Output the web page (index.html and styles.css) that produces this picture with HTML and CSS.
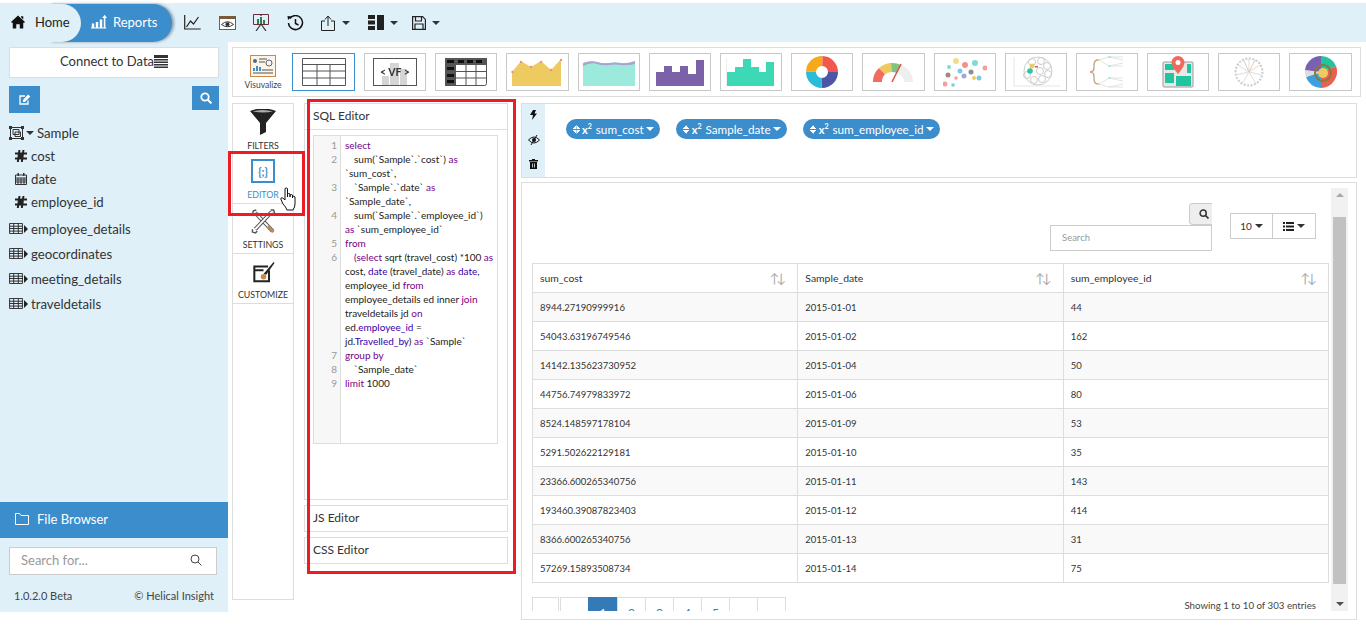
FILE: index.html
```html
<!DOCTYPE html>
<html lang="en">
<head>
    <meta charset="UTF-8">
    <meta name="viewport" content="width=device-width, initial-scale=1.0">
    <title>Helical Insight Reports</title>
    <link rel="stylesheet" href="styles.css">
</head>
<body>

<div class="page">
    <header class="topbar">
        <div class="pills">
            <a class="pill-reports">
                <svg width="16" height="16" viewBox="0 0 20 18"><path fill="#fff" d="M1 11h3v5H1zM6 9h3v7H6zM11 6h3v10h-3zM15 16h4v1H0v-1zM16 4h2v12h-2z"/><path fill="#fff" d="M17 0l3 4h-6z"/></svg>
                Reports
            </a>
            <a class="pill-home">
                <svg width="14" height="14" viewBox="0 0 16 15"><path fill="#111" d="M8 0l8 7.500-1.200 1.200L14 8v7H10v-5H6v5H2V8l-.8.7L0 7.500zM11.500 1H14v3.500l-2.500-2.300z"/></svg>
                Home
            </a>
        </div>
        <div class="tools">
            <svg class="tool" width="17" height="15" viewBox="0 0 17 15"><path fill="none" stroke="#222" stroke-width="1.200" d="M.7 0v14h16M2.500 12l4-6 3 3 5-7"/></svg>
            <svg class="tool" width="17" height="14" viewBox="0 0 17 14"><rect x=".5" y=".5" width="16" height="13" fill="#fff" stroke="#7a5a3a"/><path fill="#7a5a3a" d="M1 1h15v2H1z"/><path fill="none" stroke="#333" d="M2.500 8.500Q8.500 3 14.500 8.500 8.500 13 2.500 8.500z"/><circle cx="8.500" cy="8.300" r="2" fill="#333"/></svg>
            <svg class="tool" width="16" height="17" viewBox="0 0 16 17"><path fill="none" stroke="#6b2b3a" d="M.5.500h15v10H.5z"/><path fill="#2f7d4f" d="M4 5h2v5H4zM7 3h2v7H7zM10 6h2v4h-2z"/><path stroke="#333" stroke-width="1.200" d="M8 10L3 17M8 10l5 7M8 0v2"/></svg>
            <svg class="tool" width="17" height="16" viewBox="0 0 17 16"><path fill="none" stroke="#111" stroke-width="1.500" d="M2.800 3.500A7 7 0 1 1 1.500 8M8.500 4v4.500l3 1.500"/><path fill="#111" d="M.5 1l4 .5L1 5z"/></svg>
            <span class="tool-caret">
                <svg width="15" height="16" viewBox="0 0 15 16"><path fill="none" stroke="#222" d="M4 6H.5v9.500h13V6H10M7 11V1.500M4 4.500l3-3.500 3 3.500"/></svg>
                <i class="caret"></i>
            </span>
            <span class="tool-caret">
                <svg width="16" height="15" viewBox="0 0 16 15"><path fill="#222" d="M0 0h7v4H0zM0 5.500h7v4H0zM0 11h7v4H0zM9 0h7v15H9z"/></svg>
                <i class="caret"></i>
            </span>
            <span class="tool-caret tool-last">
                <svg width="14" height="14" viewBox="0 0 14 14"><path fill="none" stroke="#222" stroke-width="1.200" d="M.6.600h10l2.800 2.800v10H.6zM3.500 1v4h6V1M3 13.500V8h8v5.500"/></svg>
                <i class="caret"></i>
            </span>
        </div>
    </header>

    <div class="main">
        <aside class="sidebar">
            <button class="connect">Connect to Data<svg width="14" height="13" viewBox="0 0 14 13"><path fill="#333" d="M0 0h14v3H0zM0 4h14v1.500H0zM0 6.500h14V8H0zM0 9h14v1.500H0zM0 11.500h14V13H0z"/></svg></button>
            <div class="side-actions">
                <span class="btn-edit">
                    <svg width="12" height="11" viewBox="0 0 12 11"><path fill="none" stroke="#fff" stroke-width="1.300" d="M9 6.500V10H1V2h5"/><path fill="#fff" d="M4 6l5-5.500 2.300 2L6 8H4z"/></svg>
                </span>
                <span class="btn-find">
                    <svg width="12" height="12" viewBox="0 0 12 12"><circle cx="5" cy="5" r="3.700" fill="none" stroke="#fff" stroke-width="1.800"/><path stroke="#fff" stroke-width="2" d="M7.800 7.800l3.600 3.600"/></svg>
                </span>
            </div>
            <div class="tree">
                <div class="tree-row tree-root">
                    <svg width="15" height="14" viewBox="0 0 15 14"><path fill="none" stroke="#333" d="M1.500 1.500h12v11h-12zM4 3.500h6v5H4zM6 6h5.500v4.500H6z"/><path fill="#333" d="M0 0h3v3H0zM12 0h3v3h-3zM0 11h3v3H0zM12 11h3v3h-3z"/></svg>
                    <i class="caret"></i><span>Sample</span>
                </div>
                <div class="tree-row tree-leaf"><svg width="12" height="12" viewBox="0 0 12 12"><path fill="#222" d="M3.500 0h2l-.4 2.500h2L7.500 0h2L9 2.500h3v2H8.800l-.3 3H12v2H8.200L7.800 12h-2l.4-2.500h-2L3.800 12h-2l.4-2.500H0v-2h2.500l.3-3H0v-2h3.100z"/></svg><span>cost</span></div>
                <div class="tree-row tree-leaf"><svg width="12" height="12" viewBox="0 0 12 12"><path fill="none" stroke="#333" d="M.5 2h11v9.500H.5zM.5 5h11M.5 7h11M.5 9h11M3 5v6M6 5v6M9 5v6"/><path fill="#333" d="M2.500 0h1.500v3H2.500zM8 0h1.500v3H8z"/></svg><span>date</span></div>
                <div class="tree-row tree-leaf"><svg width="12" height="12" viewBox="0 0 12 12"><path fill="#222" d="M3.500 0h2l-.4 2.500h2L7.500 0h2L9 2.500h3v2H8.800l-.3 3H12v2H8.200L7.800 12h-2l.4-2.500h-2L3.800 12h-2l.4-2.500H0v-2h2.500l.3-3H0v-2h3.100z"/></svg><span>employee_id</span></div>
                <div class="tree-row tree-table tree-first"><svg width="14" height="11" viewBox="0 0 15 12"><path fill="none" stroke="#222" d="M.5.500h14v11H.5zM.5 3.500h14M.5 6h14M.5 8.800h14M5 .5v11M10 .5v11"/></svg><i class="caret-right"></i><span>employee_details</span></div>
                <div class="tree-row tree-table"><svg width="14" height="11" viewBox="0 0 15 12"><path fill="none" stroke="#222" d="M.5.500h14v11H.5zM.5 3.500h14M.5 6h14M.5 8.800h14M5 .5v11M10 .5v11"/></svg><i class="caret-right"></i><span>geocordinates</span></div>
                <div class="tree-row tree-table"><svg width="14" height="11" viewBox="0 0 15 12"><path fill="none" stroke="#222" d="M.5.500h14v11H.5zM.5 3.500h14M.5 6h14M.5 8.800h14M5 .5v11M10 .5v11"/></svg><i class="caret-right"></i><span>meeting_details</span></div>
                <div class="tree-row tree-table"><svg width="14" height="11" viewBox="0 0 15 12"><path fill="none" stroke="#222" d="M.5.500h14v11H.5zM.5 3.500h14M.5 6h14M.5 8.800h14M5 .5v11M10 .5v11"/></svg><i class="caret-right"></i><span>traveldetails</span></div>
            </div>
            <div class="file-browser">
                <svg width="14" height="12" viewBox="0 0 14 12"><path fill="none" stroke="#fff" d="M.5.500h4l1.500 2h7.500v9H.5z"/></svg>
                File Browser
            </div>
            <div class="side-search">
                <span>Search for...</span>
                <svg width="12" height="12" viewBox="0 0 12 12"><circle cx="5" cy="5" r="4" fill="none" stroke="#444"/><path stroke="#444" d="M8 8l3.500 3.500"/></svg>
            </div>
            <div class="side-foot">
                <span>1.0.2.0 Beta</span>
                <span>© Helical Insight</span>
            </div>
        </aside>

        <div class="workspace">
            <div class="vis-strip">
                <div class="vis-label">
                    <svg width="26" height="22" viewBox="0 0 26 22"><rect x=".5" y=".5" width="25" height="21" fill="#fdf3e6" stroke="#c98a4b"/><circle cx="5" cy="6" r="2" fill="#4a6a8a"/><circle cx="19" cy="8" r="3" fill="none" stroke="#4a6a8a"/><path stroke="#555" d="M9 4h8M9 7h6M3 18h20M12 15h11"/><path fill="#3c8dcb" d="M3 13h2v3H3zM6 11h2v5H6zM9 12h2v4H9z"/></svg>
                    <span>Visuvalize</span>
                </div>
                <div class="thumb thumb-active">
                    <svg viewBox="0 0 44 28" width="44" height="28"><path fill="none" stroke="#555" d="M.5.500h43v27H.5zM.5 6.500h43M.5 13h43M.5 20h43M15 6.500v21M28 6.500v21"/></svg>
                </div>
                <div class="thumb">
                    <svg viewBox="0 0 44 28" width="44" height="28"><path fill="#d5d5d5" d="M9 18h7v9H9zM17 5h9v22h-9zM27 11h7v16h-7z"/><rect x=".5" y=".5" width="43" height="27" fill="none" stroke="#555"/><text x="22" y="18" text-anchor="middle" class="vf">&lt; VF &gt;</text></svg>
                </div>
                <div class="thumb">
                    <svg viewBox="0 0 42 28" width="42" height="28"><rect x=".5" y=".5" width="41" height="27" rx="2" fill="#fff" stroke="#555"/><path fill="#555" d="M0 0h42v7H0zM0 7h11v21H0z"/><path fill="#111" d="M2 2h7v3H2zM13 2h6v3h-6zM22 2h6v3h-6zM31 2h6v3h-6zM2 9h7v3H2zM2 16h7v3H2zM2 22h7v3H2z"/><path stroke="#555" fill="none" d="M0 13.500h42M0 20h42M21 7v21M31 7v21"/></svg>
                </div>
                <div class="thumb">
                    <svg viewBox="0 0 52 28" width="52" height="28"><path fill="#eecb60" d="M1 14L10 3l10 6 10-6 10 9L50 1v27H1z"/><g fill="#ef8d8d"><circle cx="1.500" cy="14" r="1.200"/><circle cx="10" cy="4" r="1.200"/><circle cx="20" cy="9" r="1.200"/><circle cx="30" cy="4" r="1.200"/><circle cx="40" cy="12" r="1.200"/><circle cx="50" cy="2" r="1.200"/></g></svg>
                </div>
                <div class="thumb">
                    <svg viewBox="0 0 52 28" width="52" height="28"><path fill="#9beadb" d="M0 5q8-3 14-1t12 1 12 0 14-2v25H0z"/><path fill="#a9a3cf" d="M0 5q8-3 14-1t12 1 12 0 14-2v3q-8 2-14 1t-12 0-12-1T0 8z"/></svg>
                </div>
                <div class="thumb">
                    <svg viewBox="0 0 50 28" width="50" height="28"><path fill="#7b62a8" d="M1 14h8V8h8v6h8V8h8v8h8V2h8v26H1z"/></svg>
                </div>
                <div class="thumb">
                    <svg viewBox="0 0 50 28" width="50" height="28"><path stroke="#eee" d="M.5 0v28"/><path fill="#3dd9b7" d="M1 14h8v14H1zM9 9h8v19H9zM17 1h8v27h-8zM25 9h8v19h-8zM33 14h7v14h-7zM40 4h8v24h-8z"/></svg>
                </div>
                <div class="thumb">
                    <svg viewBox="0 0 32 32" width="32" height="32">
                        <circle cx="16" cy="16" r="11" fill="none" stroke="#4d55a8" stroke-width="10" stroke-dasharray="17.300 52"/>
                        <circle cx="16" cy="16" r="11" fill="none" stroke="#2bbcd8" stroke-width="10" stroke-dasharray="17.300 52" stroke-dashoffset="-17.300"/>
                        <circle cx="16" cy="16" r="11" fill="none" stroke="#f7a81b" stroke-width="10" stroke-dasharray="17.300 52" stroke-dashoffset="-34.600"/>
                        <circle cx="16" cy="16" r="11" fill="none" stroke="#f2564d" stroke-width="10" stroke-dasharray="17.300 52" stroke-dashoffset="-51.900"/>
                    </svg>
                </div>
                <div class="thumb">
                    <svg viewBox="0 0 40 20" width="40" height="20">
                        <path fill="#eee" d="M0 20A20 19 0 0 1 40 20H31A11 10 0 0 0 9 20z"/>
                        <path fill="#f46a5c" d="M0 20A20 19 0 0 1 6 6l6 6A11 10 0 0 0 9 20z"/>
                        <path fill="#eecb60" d="M6 6A20 19 0 0 1 18 1l1 9A11 10 0 0 0 12 12z"/>
                        <path fill="#7fc47f" d="M18 1A20 19 0 0 1 28 3l-4 8A11 10 0 0 0 19 10z"/>
                        <path stroke="#d9534f" stroke-width="1.500" d="M19 20L28 2"/>
                    </svg>
                </div>
                <div class="thumb">
                    <svg viewBox="0 0 44 32" width="44" height="32">
                        <circle cx="13" cy="5" r="3" fill="#eecb60" opacity=".7"/><circle cx="6" cy="11" r="2" fill="#7edccb"/><circle cx="22" cy="9" r="3" fill="#f2766b" opacity=".8"/><circle cx="32" cy="7" r="3" fill="#7edccb"/><circle cx="42" cy="12" r="2.500" fill="#f2766b" opacity=".7"/>
                        <circle cx="17" cy="15" r="2.500" fill="#7ec8e8"/><circle cx="28" cy="16" r="2.500" fill="#8d8d8d"/><circle cx="5" cy="19" r="2.500" fill="#a08a7a"/><circle cx="21" cy="20" r="2.500" fill="#a8a3d8"/><circle cx="31" cy="22" r="2" fill="#eecb60"/><circle cx="36" cy="22" r="2.500" fill="#7ec8e8"/><circle cx="13" cy="22" r="1.800" fill="#f2a09a"/><circle cx="2" cy="28" r="2.500" fill="#f2a09a"/><circle cx="10" cy="29" r="1.800" fill="#7ec8e8"/>
                    </svg>
                </div>
                <div class="thumb">
                    <svg viewBox="0 0 48 32" width="48" height="32">
                        <path stroke="#e5e5e5" fill="none" d="M2 1v29h46"/>
                        <circle cx="26" cy="15" r="14" fill="#fff" stroke="#ccc"/>
                        <g fill="none" stroke="#ccc"><circle cx="20" cy="6" r="3.500"/><circle cx="29" cy="5" r="3.500"/><circle cx="35" cy="10" r="3.500"/><circle cx="36" cy="18" r="3.500"/><circle cx="30" cy="23" r="3.500"/><circle cx="22" cy="24" r="3.500"/><circle cx="15" cy="19" r="3.500"/><circle cx="28" cy="15" r="3.500"/></g>
                        <circle cx="20" cy="10" r="2.500" fill="#eecb60"/><circle cx="18" cy="15" r="2.800" fill="#2fc4a4"/><path fill="#e0564c" d="M23 10h3v1.500h-3z"/>
                    </svg>
                </div>
                <div class="thumb">
                    <svg viewBox="0 0 34 32" width="34" height="32">
                        <path fill="none" stroke="#b9a58e" stroke-width="1.300" d="M8 4Q4 4 4 9v3q0 3-3 4 3 1 3 4v3q0 5 4 5"/>
                        <path fill="#f2967d" d="M0 15h2v2H0z"/><path fill="#eecb60" d="M7 3h2v2H7zM7 27h2v2H7z"/>
                        <g fill="none" stroke="#e3e3e3"><path d="M9 4l10-3h14M9 4l10 6h14M19 1l14 3M19 10l14-3"/><path d="M9 28l10-6h14M9 28l10 3h14M19 22l14 3M19 31l14-3"/></g>
                        <path fill="#b8e8de" d="M18 0h3v2h-3zM18 9h3v2h-3zM18 21h3v2h-3z"/>
                    </svg>
                </div>
                <div class="thumb">
                    <svg viewBox="0 0 32 32" width="32" height="32">
                        <rect x="1" y="6" width="30" height="25" rx="1" fill="#e8e8e8" stroke="#999"/>
                        <path fill="#22c4a0" d="M3 8h9v6H3zM3 17h9v10H3zM14 20h15v10H14zM25 8h4v9h-4z"/>
                        <path fill="#ef6a5c" d="M16 0a6.500 6.500 0 0 1 6.500 6.500C22.500 11 16 18 16 18S9.500 11 9.500 6.500A6.500 6.500 0 0 1 16 0z"/>
                        <circle cx="16" cy="6.500" r="2.500" fill="#fff"/>
                    </svg>
                </div>
                <div class="thumb">
                    <svg viewBox="0 0 30 30" width="30" height="30">
                        <circle cx="15" cy="15" r="13.500" fill="none" stroke="#ccc" stroke-width="2" stroke-dasharray="2 1.500"/>
                        <path fill="none" stroke="#ddd" d="M15 15V2M15 15L4 8M15 15L26 8M15 15L2 18M15 15L28 18M15 15L8 27M15 15L22 27"/>
                        <path fill="none" stroke="#e8c9b0" d="M15 15L10 4M15 15L21 3"/>
                    </svg>
                </div>
                <div class="thumb">
                    <svg viewBox="0 0 32 32" width="32" height="32">
                        <path fill="#22c4a0" d="M16 16V0a16 16 0 0 1 15 10z"/>
                        <path fill="#e8604f" d="M16 16l15-6a16 16 0 0 1-2 15 16 16 0 0 1-13 7z"/>
                        <path fill="#3c9fe0" d="M16 16v16A16 16 0 0 1 1 21z"/>
                        <path fill="#ddd" d="M16 16L1 21a16 16 0 0 1-1-7z"/>
                        <path fill="#7b5fb0" d="M16 16L0 14A16 16 0 0 1 16 0z"/>
                        <circle cx="18" cy="17" r="8" fill="none" stroke="#8a7a3a" stroke-width="2"/>
                        <circle cx="18" cy="17" r="5" fill="#eecb60"/>
                    </svg>
                </div>
            </div>

            <div class="lower">
                <nav class="tabs">
                    <div class="tab">
                        <svg width="26" height="26" viewBox="0 0 26 26"><path fill="#222" d="M0 2q13-5 26 0L16 14v9l-6 3V14z"/><path fill="#aaa" d="M3 2.500q10-3 20 0-10 2-20 0z"/></svg>
                        <span>FILTERS</span>
                    </div>
                    <div class="tab tab-active">
                        <span class="brace-icon">{;}</span>
                        <span>EDITOR</span>
                    </div>
                    <div class="tab">
                        <svg width="25" height="25" viewBox="0 0 25 26">
                            <path stroke="#555" stroke-width="4" d="M4 4l18 19"/><path stroke="#fff" stroke-width="2" d="M4 4l18 19"/>
                            <path stroke="#555" stroke-width="4" d="M21 3L4 21"/><path stroke="#fff" stroke-width="2" d="M21 3L4 21"/>
                            <path fill="none" stroke="#555" stroke-width="1.500" d="M5 1L2 2 1 5l2 2M20 1l3 0 1 3-2 2M1 21l0 3 3 1 2-2"/>
                            <path stroke="#b98a5a" stroke-width="3" d="M17 18l6 6"/>
                        </svg>
                        <span>SETTINGS</span>
                    </div>
                    <div class="tab">
                        <svg class="tab-customize" width="23" height="22" viewBox="0 0 24 24"><path fill="none" stroke="#222" stroke-width="2.200" d="M18 9v12H2V5h15M2 9h10"/><path fill="#222" d="M23 0l1 1-9 13-3-1z"/><circle cx="12" cy="16" r="3" fill="#c98a4b"/></svg>
                        <span>CUSTOMIZE</span>
                    </div>
                </nav>

                <section class="editors">
                    <div class="editor-box editor-sql">
                        <div class="editor-head">SQL Editor</div>
                        <div class="code">
                            <div class="code-line"><b>1</b><p><em>select</em></p></div>
                            <div class="code-line"><b>2</b><p class="ind">sum(`Sample`.`cost`) <em>as</em> `sum_cost`,</p></div>
                            <div class="code-line"><b>3</b><p class="ind">`Sample`.`date` <em>as</em> `Sample_date`,</p></div>
                            <div class="code-line"><b>4</b><p class="ind">sum(`Sample`.`employee_id`)<br><em>as</em> `sum_employee_id`</p></div>
                            <div class="code-line"><b>5</b><p><em>from</em></p></div>
                            <div class="code-line"><b>6</b><p class="ind"><em>(select</em> sqrt (travel_cost) *100 <em>as</em> cost, <u>date</u> (travel_date) <em>as</em> <u>date</u>, employee_id <em>from</em> employee_details ed inner <em>join</em> traveldetails jd <em>on</em><br>ed.<u>employee_id</u> =<br>jd.<u>Travelled_by</u>) <em>as</em> `Sample`</p></div>
                            <div class="code-line"><b>7</b><p><em>group by</em></p></div>
                            <div class="code-line"><b>8</b><p class="ind">`Sample_date`</p></div>
                            <div class="code-line"><b>9</b><p><em>limit</em> 1000</p></div>
                        </div>
                    </div>
                    <div class="editor-box editor-mini">JS Editor</div>
                    <div class="editor-box editor-mini">CSS Editor</div>
                </section>

                <section class="results">
                    <div class="fields-card">
                        <div class="field-tools">
                            <svg width="7" height="10" viewBox="0 0 7 10"><path fill="#111" d="M3 0h3L4.500 3.500H7L2 10l1-5H0z"/></svg>
                            <svg width="12" height="10" viewBox="0 0 12 10"><path fill="none" stroke="#111" d="M.5 5Q6-1 11.500 5 6 11 .5 5z"/><circle cx="6" cy="5" r="2" fill="#111"/><path stroke="#111" d="M9 0L3 10"/></svg>
                            <svg width="9" height="10" viewBox="0 0 9 10"><path fill="#111" d="M3 0h3v1h3v1.500H0V1h3zM1 3h7v7H1zM3 4.500v4h.8v-4zM5.200 4.500v4H6v-4z"/></svg>
                        </div>
                        <div class="field-pills">
                            <span class="field"><i class="sort-mini"></i><strong>x<sup>2</sup></strong>sum_cost<i class="caret"></i></span>
                            <span class="field"><i class="sort-mini"></i><strong>x<sup>2</sup></strong>Sample_date<i class="caret"></i></span>
                            <span class="field"><i class="sort-mini"></i><strong>x<sup>2</sup></strong>sum_employee_id<i class="caret"></i></span>
                        </div>
                    </div>

                    <div class="table-card">
                        <div class="table-scroll">
                            <div class="table-tools">
                                <div class="table-search">
                                    <span class="search-btn"><svg width="10" height="10" viewBox="0 0 12 12"><circle cx="5" cy="5" r="3.700" fill="none" stroke="#333" stroke-width="1.800"/><path stroke="#333" stroke-width="2" d="M7.800 7.800l3.600 3.600"/></svg></span>
                                    <div class="search-input">Search</div>
                                </div>
                                <div class="table-btns">
                                    <span>10<i class="caret"></i></span>
                                    <span><svg width="11" height="9" viewBox="0 0 11 9"><path fill="#222" d="M0 0h2v2H0zM3 0h8v2H3zM0 3.500h2v2H0zM3 3.500h8v2H3zM0 7h2v2H0zM3 7h8v2H3z"/></svg><i class="caret"></i></span>
                                </div>
                            </div>
                            <table class="data">
                                <thead>
                                    <tr><th>sum_cost<span class="sort">↑↓</span></th><th>Sample_date<span class="sort">↑↓</span></th><th>sum_employee_id<span class="sort">↑↓</span></th></tr>
                                </thead>
                                <tbody>
                                    <tr><td>8944.27190999916</td><td>2015-01-01</td><td>44</td></tr>
                                    <tr><td>54043.63196749546</td><td>2015-01-02</td><td>162</td></tr>
                                    <tr><td>14142.135623730952</td><td>2015-01-04</td><td>50</td></tr>
                                    <tr><td>44756.74979833972</td><td>2015-01-06</td><td>80</td></tr>
                                    <tr><td>8524.148597178104</td><td>2015-01-09</td><td>53</td></tr>
                                    <tr><td>5291.502622129181</td><td>2015-01-10</td><td>35</td></tr>
                                    <tr><td>23366.600265340756</td><td>2015-01-11</td><td>143</td></tr>
                                    <tr><td>193460.39087823403</td><td>2015-01-12</td><td>414</td></tr>
                                    <tr><td>8366.600265340756</td><td>2015-01-13</td><td>31</td></tr>
                                    <tr><td>57269.15893508734</td><td>2015-01-14</td><td>75</td></tr>
                                </tbody>
                            </table>
                            <div class="table-foot">
                                <ul class="pager">
                                    <li class="muted">«</li><li class="muted">‹</li><li class="on">1</li><li>2</li><li>3</li><li>4</li><li>5</li><li class="muted">›</li><li class="muted">»</li>
                                </ul>
                                <span class="showing">Showing 1 to 10 of 303 entries</span>
                            </div>
                        </div>
                        <div class="scrollbar">
                            <i class="arrow-up"></i>
                            <div class="thumb-bar"></div>
                            <i class="arrow-down"></i>
                        </div>
                    </div>
                </section>
            </div>
        </div>
    </div>

    <!-- annotations drawn on top of the screenshot -->
    <div class="mark mark-tab"></div>
    <div class="mark mark-sql"></div>
    <svg class="hand" width="19" height="26" viewBox="0 0 19 26"><path fill="#fff" stroke="#111" d="M5 1.500q1.500-1 2.500 0V10l0-3q1.500-1 2.500 0v3-2q1.500-1 2.500 0v3-1.500q1.500-.8 2.500.5v7q0 3-2 6H7q-1-3-4-6L.8 12q0-2 2-1L5 13z"/></svg>
</div>

</body>
</html>
```

FILE: styles.css
```css
* {
    box-sizing: border-box;
}

body {
    margin: 0;
    background-color: #fff;
    color: #333;
    font-family: "Lato", "Open Sans", sans-serif;
}

.page {
    position: relative;
    width: 1366px;
    height: 627px;
    overflow: hidden;
    padding-top: 3px;
}

.caret {
    display: inline-block;
    width: 0;
    height: 0;
    border-left: 4px solid transparent;
    border-right: 4px solid transparent;
    border-top: 4px solid currentColor;
    vertical-align: middle;
}

.caret-right {
    display: inline-block;
    width: 0;
    height: 0;
    border-top: 4px solid transparent;
    border-bottom: 4px solid transparent;
    border-left: 4px solid #222;
}

/* Top bar */
.topbar {
    display: flex;
    align-items: center;
    height: 39px;
    background-color: #dff0f9;
}

.pills {
    position: relative;
    width: 172px;
    height: 38px;
    flex-shrink: 0;
}

.pill-home,
.pill-reports {
    position: absolute;
    top: 0;
    height: 38px;
    display: flex;
    align-items: center;
    padding-bottom: 1px;
    font-size: 13px;
}

.pill-home {
    left: 0;
    width: 81px;
    gap: 10px;
    padding-left: 11px;
    background-color: #dff0f9;
    border-radius: 0 19px 19px 0;
    color: #222;
}

.pill-reports {
    left: 50px;
    width: 122px;
    gap: 6px;
    padding-left: 41px;
    background-color: #3c8dcb;
    border-radius: 0 19px 19px 0;
    box-shadow: 2px 0 3px #8a9bab;
    color: #fff;
}

.tools {
    display: flex;
    align-items: center;
    margin-left: 12px;
    gap: 17.500px;
}

.tool-caret {
    display: flex;
    align-items: center;
    gap: 6px;
    color: #333;
}

.tool-last {
    margin-left: -3px;
}

/* Left sidebar */
.main {
    display: flex;
}

.sidebar {
    display: flex;
    flex-direction: column;
    width: 228px;
    height: 570px;
    padding-top: 5px;
    flex-shrink: 0;
    background-color: #dff0f9;
}

.connect {
    display: flex;
    align-items: center;
    justify-content: center;
    width: 210px;
    height: 31px;
    margin-left: 9px;
    padding: 0 0 3px;
    background-color: #fff;
    border: 1px solid #ddd;
    color: #333;
    font-family: inherit;
    font-size: 13px;
}

.side-actions {
    display: flex;
    justify-content: space-between;
    align-items: flex-start;
    margin: 8px 9px 0;
}

.btn-edit,
.btn-find {
    display: flex;
    align-items: center;
    justify-content: center;
    background-color: #3c8dcb;
}

.btn-edit {
    width: 31px;
    height: 27px;
}

.btn-find {
    width: 27px;
    height: 24px;
}

.tree {
    margin-top: 8px;
    font-size: 13.200px;
    color: #333;
}

.tree-row {
    display: flex;
    align-items: center;
    height: 23px;
}

.tree-root {
    padding-left: 9px;
    gap: 2px;
}

.tree-root span {
    margin-left: 1px;
}

.tree-leaf {
    padding-left: 15px;
    gap: 4px;
}

.tree-table {
    height: 25px;
    padding-left: 9px;
    gap: 1px;
}

.tree-table span {
    margin-left: 2px;
}

.tree-first {
    margin-top: 3px;
}

.file-browser {
    display: flex;
    align-items: center;
    gap: 8px;
    height: 36px;
    margin-top: auto;
    padding: 0 0 3px 15px;
    background-color: #3c8dcb;
    color: #fff;
    font-size: 13px;
}

.side-search {
    display: flex;
    align-items: center;
    justify-content: space-between;
    width: 208px;
    height: 28px;
    margin: 9px 0 0 9px;
    padding: 0 14px 2px 11px;
    background-color: #fff;
    border: 1px solid #ccc;
    color: #999;
    font-size: 13px;
}

.side-foot {
    display: flex;
    justify-content: space-between;
    padding: 14px 14px 10px;
    font-size: 11px;
    color: #444;
}

/* Visual type strip */
.workspace {
    width: 1133px;
    padding: 5px 0 0 4px;
}

.vis-strip {
    display: flex;
    align-items: center;
    gap: 9px;
    width: 1129px;
    height: 50px;
    padding-left: 10px;
    background-color: #fff;
    border: 1px solid #ddd;
}

.vis-label {
    display: flex;
    flex-direction: column;
    align-items: center;
    width: 40px;
    font-size: 8.500px;
    color: #444;
}

.vis-label span {
    margin-top: 3px;
}

.thumb {
    display: flex;
    align-items: center;
    justify-content: center;
    width: 62.200px;
    height: 38px;
    overflow: hidden;
    flex-shrink: 0;
    border: 1px solid #c8c8c8;
}

.thumb svg {
    filter: blur(.4px);
}

.thumb-active {
    border-color: #3c8dcb;
    width: 63px;
}

.vf {
    font-size: 10.500px;
    font-weight: 700;
    fill: #333;
}

/* Lower area */
.lower {
    display: flex;
    margin-top: 6px;
}

.tabs {
    width: 62px;
    height: 497px;
    margin-right: 10px;
    background-color: #fff;
    border: 1px solid #ddd;
}

.tab {
    display: flex;
    flex-direction: column;
    align-items: center;
    height: 50px;
    padding-top: 5px;
    border-bottom: 1px solid #ddd;
    font-size: 8.800px;
    color: #333;
    gap: 5px;
}

.tab-customize {
    margin-top: 3px;
}

.tab-active {
    color: #3c8dcb;
    gap: 6px;
}

.brace-icon {
    display: flex;
    align-items: center;
    justify-content: center;
    width: 24px;
    height: 24px;
    border: 2px solid #3c8dcb;
    font-size: 11px;
    font-weight: 700;
}

.editors {
    display: flex;
    flex-direction: column;
    gap: 5px;
    width: 204px;
    margin-right: 13px;
}

.editor-box {
    background-color: #fff;
    border: 1px solid #ddd;
}

.editor-sql {
    height: 397px;
}

.editor-head {
    height: 26px;
    padding: 4px 8px;
    border-bottom: 1px solid #ddd;
    font-size: 12px;
}

.editor-mini {
    height: 27px;
    padding: 4px 8px;
    font-size: 12px;
}

.code {
    width: 185px;
    height: 309px;
    margin: 5px 0 0 8px;
    padding-top: 2px;
    border: 1px solid #ddd;
    background: linear-gradient(to right, #f7f7f7 26px, #ddd 26px, #ddd 27px, #fff 27px);
    font-size: 10px;
    line-height: 14px;
    color: #222;
}

.code-line {
    display: flex;
}

.code-line b {
    width: 24px;
    padding-right: 1px;
    flex-shrink: 0;
    font-weight: 400;
    text-align: right;
    color: #999;
}

.code-line p {
    margin: 0 0 0 7px;
    width: 152px;
}

.code-line .ind {
    text-indent: 9px;
}

.code-line em {
    font-style: normal;
    color: #708;
}

.code-line u {
    text-decoration: none;
    color: #30a;
}

/* Results */
.results {
    display: flex;
    flex-direction: column;
    gap: 4px;
    width: 836px;
}

.fields-card {
    display: flex;
    height: 75px;
    background-color: #fff;
    border: 1px solid #ddd;
}

.field-tools {
    display: flex;
    flex-direction: column;
    align-items: center;
    justify-content: space-between;
    width: 23px;
    padding: 6px 0 8px;
    background-color: #dff0f9;
}

.field-pills {
    display: flex;
    align-items: flex-start;
    gap: 16px;
    padding: 15px 0 0 21px;
}

.field {
    display: flex;
    align-items: center;
    height: 20px;
    padding: 0 6px 0 7px;
    gap: 2px;
    background-color: #3c8dcb;
    border-radius: 10px;
    color: #fff;
    font-size: 11.700px;
}

.field strong {
    font-size: 11px;
    margin-right: 2px;
}

.field sup {
    font-size: 7px;
    line-height: 0;
}

.sort-mini {
    display: inline-block;
    width: 7px;
    height: 9px;
    background:
        linear-gradient(to bottom right, transparent 50%, #fff 50%) 0 0 / 3.5px 4px no-repeat,
        linear-gradient(to bottom left, transparent 50%, #fff 50%) 3.5px 0 / 3.5px 4px no-repeat,
        linear-gradient(to top right, transparent 50%, #fff 50%) 0 5px / 3.5px 4px no-repeat,
        linear-gradient(to top left, transparent 50%, #fff 50%) 3.5px 5px / 3.5px 4px no-repeat;
}

.table-card {
    display: flex;
    height: 438px;
    padding-bottom: 8px;
    background-color: #fff;
    border: 1px solid #ddd;
}

.table-scroll {
    width: 809px;
    height: 428px;
    padding-left: 10px;
    overflow: hidden;
}

.table-tools {
    display: flex;
    justify-content: flex-end;
    height: 80px;
    padding-right: 15px;
}

.table-search {
    display: flex;
    flex-direction: column;
    align-items: flex-end;
    margin: 20px 18px 0 0;
}

.search-btn {
    display: flex;
    align-items: center;
    justify-content: center;
    width: 23px;
    height: 22px;
    padding-left: 5px;
    background-color: #eee;
    border: 1px solid #ccc;
    border-right: 0;
    border-radius: 4px 0 0 4px;
}

.search-input {
    width: 162px;
    height: 26px;
    padding: 6px 11px;
    border: 1px solid #ccc;
    background-color: #fff;
    color: #999;
    font-size: 9.500px;
}

.table-btns {
    display: flex;
    height: 26px;
    margin-top: 30px;
    font-size: 10px;
    color: #333;
}

.table-btns span {
    display: flex;
    align-items: center;
    justify-content: center;
    gap: 3px;
    width: 43px;
    border: 1px solid #ccc;
}

.table-btns span + span {
    border-left: 0;
}

.data {
    width: 797px;
    border-collapse: collapse;
    table-layout: fixed;
    font-size: 9.500px;
    color: #333;
}

.data th,
.data td {
    height: 29px;
    padding: 0 7px;
    border: 1px solid #ddd;
    font-weight: 400;
    text-align: left;
}

.data th {
    position: relative;
    font-size: 10.400px;
}

.sort {
    position: absolute;
    right: 14px;
    top: 6px;
    font-size: 13px;
    letter-spacing: -3px;
    color: #aaa;
}

.data tbody tr:nth-child(odd) {
    background-color: #f9f9f9;
}

.table-foot {
    display: flex;
    justify-content: space-between;
    align-items: flex-start;
    width: 784px;
    margin-top: 14px;
}

.pager {
    display: flex;
    margin: 0;
    padding: 0;
    list-style: none;
    font-size: 12px;
    color: #337ab7;
}

.pager li {
    width: 29px;
    height: 30px;
    padding-top: 7px;
    margin-left: -1px;
    border: 1px solid #ddd;
    text-align: center;
    background-color: #fff;
}

.pager li:first-child {
    width: 27px;
    margin-left: 0;
    margin-right: 2px;
}

.pager .muted {
    color: #999;
}

.pager .on {
    width: 30px;
    background-color: #337ab7;
    border-color: #337ab7;
    color: #fff;
}

.showing {
    margin-top: 2px;
    font-size: 9.700px;
    color: #444;
}

.scrollbar {
    display: flex;
    flex-direction: column;
    align-items: center;
    justify-content: space-between;
    width: 17px;
    height: 423px;
    margin-top: 5px;
    padding: 5px 0;
    background-color: #f1f1f1;
}

.thumb-bar {
    width: 13px;
    height: 367px;
    margin-top: 2px;
    background-color: #c1c1c1;
}

.arrow-up,
.arrow-down {
    width: 0;
    height: 0;
    border-left: 4px solid transparent;
    border-right: 4px solid transparent;
}

.arrow-up {
    border-bottom: 4px solid #a8a8a8;
}

.arrow-down {
    border-top: 4px solid #505050;
}

/* Red annotation boxes and pointer */
.mark {
    position: absolute;
    border: 3px solid #ed1c24;
}

.mark-tab {
    left: 228px;
    top: 151px;
    width: 77px;
    height: 65px;
}

.mark-sql {
    left: 307px;
    top: 99px;
    width: 209px;
    height: 475px;
}

.hand {
    position: absolute;
    left: 280px;
    top: 187px;
}
```
